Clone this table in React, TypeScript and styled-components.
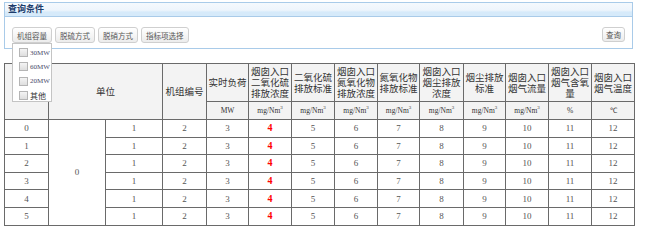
import React from "react";
import styled, { createGlobalStyle } from "styled-components";

const GlobalStyle = createGlobalStyle`
  html, body {
    margin: 0;
    padding: 0;
    background: #ffffff;
  }
  body {
    font-family: "Noto Sans CJK SC", "Liberation Sans", sans-serif;
    color: #333;
  }
`;

const Page = styled.div`
  width: 650px;
  padding: 2px 0 0 4px;
  box-sizing: border-box;
`;

// 查询条件 面板
const QueryPanel = styled.div`
  width: 629px;
  box-sizing: border-box;
  border: 1px solid #a9cbe9;
`;

const PanelHeader = styled.div`
  height: 13px;
  padding-left: 3px;
  border-bottom: 1px solid #a9cbe9;
  background: linear-gradient(#f5f9fd 0%, #eef5fc 55%, #d6eafa 70%, #d6eafa 100%);
  font-size: 9px;
  line-height: 12px;
  font-weight: bold;
  color: #1c3c6c;
`;

const PanelBody = styled.div`
  display: flex;
  align-items: flex-start;
  padding: 10px 7px 5px 7px;
`;

const ButtonGroup = styled.div`
  display: flex;
  gap: 3px;
  flex: 1;
`;

const DropWrap = styled.div`
  position: relative;
  display: flex;
`;

const ToolButton = styled.button<{ $small?: boolean }>`
  display: block;
  height: ${(p) => (p.$small ? 15 : 16)}px;
  padding: 0 ${(p) => (p.$small ? 3 : 4)}px;
  margin: 0;
  border: 1px solid #cfcfcf;
  border-radius: 3px;
  background: linear-gradient(#ffffff, #ececec);
  font-family: "Noto Sans CJK SC", sans-serif;
  font-size: 7.5px;
  line-height: 13px;
  color: #555;
  cursor: pointer;
`;

const DropMenu = styled.div`
  position: absolute;
  top: 16px;
  left: 0;
  width: 40px;
  height: 59px;
  box-sizing: border-box;
  padding: 3px 0 0 6px;
  background: #fff;
  border: 1px solid #c4c4c4;
  display: flex;
  flex-direction: column;
  gap: 2.5px;
  z-index: 5;
`;

const Option = styled.label`
  display: flex;
  align-items: center;
  height: 12px;
  gap: 2px;
  font-family: "Liberation Serif", "Noto Sans CJK SC", serif;
  font-size: 7px;
  color: #4a4a6a;
`;

const Box = styled.span`
  width: 7px;
  height: 7px;
  border: 1px solid #b5b5b5;
  background: linear-gradient(#f4f4f4, #dedede);
`;

const OptionCn = styled.span`
  font-family: "Noto Sans CJK SC", sans-serif;
  font-size: 8px;
  color: #333;
`;

// 数据表
const Table = styled.table`
  margin-top: 14px;
  width: 630px;
  table-layout: fixed;
  border-collapse: collapse;
  border: 1px solid #555;
`;

const Th = styled.th<{ $unit?: boolean }>`
  border: 1px solid #6a6a6a;
  background: #f3f3f3;
  font-weight: normal;
  padding: 0;
  text-align: center;
  vertical-align: middle;
  font-family: ${(p) =>
    p.$unit ? `"Liberation Serif", serif` : `"Noto Sans CJK SC", sans-serif`};
  font-size: ${(p) => (p.$unit ? 7.5 : 9.5)}px;
  line-height: ${(p) => (p.$unit ? 17 : 11)}px;
  height: ${(p) => (p.$unit ? 17 : 37)}px;
  color: #333;
  white-space: nowrap;
  overflow: hidden;
`;

const Td = styled.td<{ $alert?: boolean }>`
  border: 1px solid #6a6a6a;
  background: #fff;
  text-align: center;
  height: 16.6px;
  line-height: 10px;
  padding: 0;
  font-family: "Liberation Serif", serif;
  font-size: ${(p) => (p.$alert ? 10 : 9)}px;
  font-weight: ${(p) => (p.$alert ? "bold" : "normal")};
  color: ${(p) => (p.$alert ? "#ff0000" : "#555")};
`;

const Sup = styled.span`
  sup {
    font-size: 5px;
    line-height: 0;
    vertical-align: 4px;
  }
`;

const widths = [44, 57, 57, 44, 42, 43, 43, 43, 42, 44, 42, 43, 43, 43];

const metricHeads: { title: string[]; unit: React.ReactNode }[] = [
  { title: ["实时负荷"], unit: "MW" },
  { title: ["烟囱入口", "二氧化硫", "排放浓度"], unit: <>mg/Nm<sup>3</sup></> },
  { title: ["二氧化硫", "排放标准"], unit: <>mg/Nm<sup>3</sup></> },
  { title: ["烟囱入口", "氮氧化物", "排放浓度"], unit: <>mg/Nm<sup>3</sup></> },
  { title: ["氮氧化物", "排放标准"], unit: <>mg/Nm<sup>3</sup></> },
  { title: ["烟囱入口", "烟尘排放", "浓度"], unit: <>mg/Nm<sup>3</sup></> },
  { title: ["烟尘排放", "标准"], unit: <>mg/Nm<sup>3</sup></> },
  { title: ["烟囱入口", "烟气流量"], unit: <>mg/Nm<sup>3</sup></> },
  { title: ["烟囱入口", "烟气含氧", "量"], unit: "%" },
  { title: ["烟囱入口", "烟气温度"], unit: "℃" },
];

const rows = [0, 1, 2, 3, 4, 5];

const App: React.FC = () => {
  return (
    <Page>
      <GlobalStyle />
      <QueryPanel>
        <PanelHeader>查询条件</PanelHeader>
        <PanelBody>
          <ButtonGroup>
            <DropWrap>
              <ToolButton>机组容量</ToolButton>
              <DropMenu>
                <Option>
                  <Box />
                  30MW
                </Option>
                <Option>
                  <Box />
                  60MW
                </Option>
                <Option>
                  <Box />
                  20MW
                </Option>
                <Option>
                  <Box />
                  <OptionCn>其他</OptionCn>
                </Option>
              </DropMenu>
            </DropWrap>
            <ToolButton>脱硫方式</ToolButton>
            <ToolButton>脱硝方式</ToolButton>
            <ToolButton>指标项选择</ToolButton>
          </ButtonGroup>
          <ToolButton $small>查询</ToolButton>
        </PanelBody>
      </QueryPanel>

      <Table>
        <colgroup>
          {widths.map((w, i) => (
            <col key={i} style={{ width: w }} />
          ))}
        </colgroup>
        <thead>
          <tr>
            <Th rowSpan={2} />
            <Th rowSpan={2} colSpan={2}>
              单位
            </Th>
            <Th rowSpan={2}>机组编号</Th>
            {metricHeads.map((m, i) => (
              <Th key={i}>
                {m.title.map((t, j) => (
                  <div key={j}>{t}</div>
                ))}
              </Th>
            ))}
          </tr>
          <tr>
            {metricHeads.map((m, i) => (
              <Th key={i} $unit>
                <Sup>{m.unit}</Sup>
              </Th>
            ))}
          </tr>
        </thead>
        <tbody>
          {rows.map((r) => (
            <tr key={r}>
              <Td>{r}</Td>
              {r === 0 && <Td rowSpan={6}>0</Td>}
              <Td>1</Td>
              <Td>2</Td>
              <Td>3</Td>
              <Td $alert>4</Td>
              <Td>5</Td>
              <Td>6</Td>
              <Td>7</Td>
              <Td>8</Td>
              <Td>9</Td>
              <Td>10</Td>
              <Td>11</Td>
              <Td>12</Td>
            </tr>
          ))}
        </tbody>
      </Table>
    </Page>
  );
};

export default App;
